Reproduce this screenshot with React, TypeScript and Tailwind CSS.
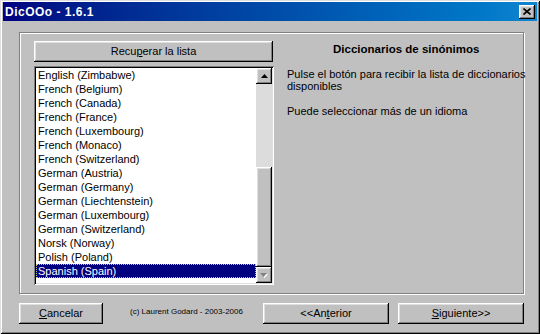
const raised =
  'shadow-[inset_-1px_-1px_#000,inset_1px_1px_#fff,inset_-2px_-2px_#808080,inset_2px_2px_#dfdfdf]';
const sunken =
  'shadow-[inset_1px_1px_#808080,inset_-1px_-1px_#fff,inset_2px_2px_#000,inset_-2px_-2px_#dfdfdf]';

const languages = [
  'English (Zimbabwe)',
  'French (Belgium)',
  'French (Canada)',
  'French (France)',
  'French (Luxembourg)',
  'French (Monaco)',
  'French (Switzerland)',
  'German (Austria)',
  'German (Germany)',
  'German (Liechtenstein)',
  'German (Luxembourg)',
  'German (Switzerland)',
  'Norsk (Norway)',
  'Polish (Poland)',
  'Spanish (Spain)',
];

function Button({ children, className = '' }: { children: React.ReactNode; className?: string }) {
  return (
    <div
      className={`flex h-[21px] items-center justify-center bg-[#c0c0c0] text-[11px] leading-none text-black ${raised} ${className}`}
    >
      {children}
    </div>
  );
}

function ScrollBar() {
  return (
    <div className="flex w-[16px] flex-col">
      <div className={`flex h-[16px] items-center justify-center bg-[#c0c0c0] ${raised}`}>
        <svg width="7" height="4" viewBox="0 0 7 4">
          <path d="M3.5 0 L7 4 L0 4 Z" fill="#000" />
        </svg>
      </div>
      <div className="h-[83px] bg-[#dcdcdc]" />
      <div className={`h-[100px] bg-[#c0c0c0] ${raised}`} />
      <div className={`flex h-[16px] items-center justify-center bg-[#c0c0c0] ${raised}`}>
        <svg width="8" height="5" viewBox="0 0 8 5">
          <path d="M1 1 L8 1 L4.5 5 Z" fill="#fff" />
          <path d="M0 0 L7 0 L3.5 4 Z" fill="#808080" />
        </svg>
      </div>
    </div>
  );
}

export default function App() {
  return (
    <div
      className="flex h-[334px] w-[540px] flex-col bg-[#c0c0c0] px-[3px] pt-[2px] text-black shadow-[inset_1px_1px_#dfdfdf,inset_-1px_-1px_#000,inset_2px_2px_#fff,inset_-2px_-2px_#808080]"
      style={{ fontFamily: '"Liberation Sans", Arial, sans-serif' }}
    >
      {/* title bar */}
      <div className="flex h-[19px] items-center justify-between bg-gradient-to-r from-[#000080] to-[#1084d0] pl-[2px] pr-[2px]">
        <span className="text-[12px] font-bold leading-none tracking-[0.5px] text-white">DicOOo - 1.6.1</span>
        <div className={`flex h-[14px] w-[16px] items-center justify-center bg-[#c0c0c0] ${raised}`}>
          <svg width="8" height="7" viewBox="0 0 8 7">
            <path d="M0.5 0.5 L7.5 6.5 M7.5 0.5 L0.5 6.5" stroke="#000" strokeWidth="1.6" />
          </svg>
        </div>
      </div>

      {/* group box */}
      <div className="ml-[16px] mt-[11px] flex h-[262px] w-[505px] border border-[#808080] shadow-[1px_1px_0_#fff,inset_1px_1px_0_#fff]">
        <div className="flex w-[254px] flex-col pl-[14px] pt-[8px]">
          <Button className="w-[239px]">
            Recu<span className="underline">p</span>erar la lista
          </Button>
          <div className={`mt-[4px] flex h-[219px] w-[240px] bg-white p-[2px] ${sunken}`}>
            <div className="flex flex-1 flex-col overflow-hidden">
              {languages.map((lang, i) => {
                const selected = i === languages.length - 1;
                return (
                  <div
                    key={lang}
                    className={
                      selected
                        ? 'h-[14px] shrink-0 border border-dotted border-[#c8c870] bg-[#000080] pl-[1px] text-[11px] leading-[12px] text-white'
                        : 'h-[14px] shrink-0 pl-[2px] text-[11px] leading-[14px]'
                    }
                  >
                    {lang}
                  </div>
                );
              })}
            </div>
            <ScrollBar />
          </div>
        </div>

        <div className="flex flex-1 flex-col pl-[13px] pr-[4px] pt-[9px] text-[11px]">
          <div className="text-center text-[11.5px] font-bold leading-[14px]">Diccionarios de sinónimos</div>
          <p className="mt-[12px] whitespace-nowrap leading-[12px]">
            Pulse el botón para recibir la lista de diccionarios
            <br />
            disponibles
          </p>
          <p className="mt-[13px] whitespace-nowrap leading-[12px]">Puede seleccionar más de un idioma</p>
        </div>
      </div>

      {/* bottom buttons */}
      <div className="ml-[16px] mt-[9px] flex w-[505px] items-start">
        <Button className="w-[84px]">
          <span className="underline">C</span>ancelar
        </Button>
        <span className="ml-[27px] mt-[5px] flex-1 text-[8px] leading-none">(c) Laurent Godard - 2003-2006</span>
        <Button className="w-[126px]">
          &lt;&lt;An<span className="underline">t</span>erior
        </Button>
        <Button className="ml-[9px] w-[126px]">
          <span className="underline">S</span>iguiente&gt;&gt;
        </Button>
      </div>
    </div>
  );
}
